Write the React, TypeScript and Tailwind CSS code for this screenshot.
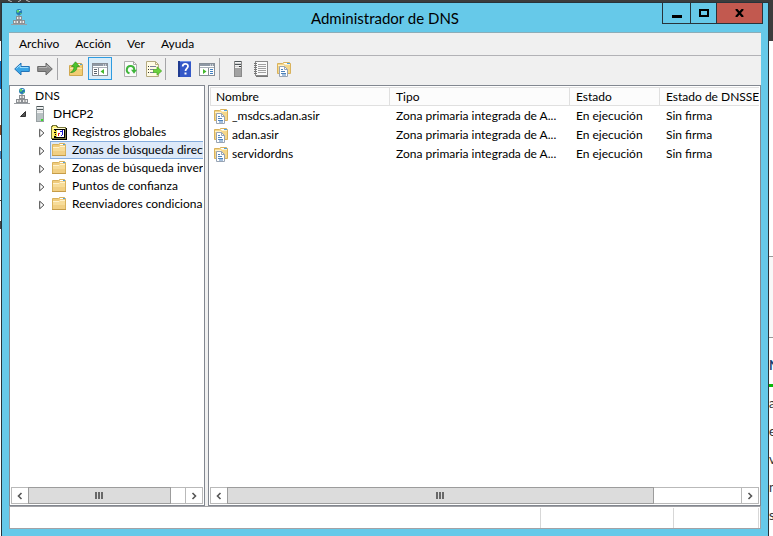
import React from "react";

type IconProps = { className?: string };

const svgProps = {
  width: 16,
  height: 16,
  viewBox: "0 0 16 16",
  "aria-hidden": true,
} as const;

function DnsIcon({ className = "" }: IconProps) {
  return (
    <svg {...svgProps} className={`shrink-0 ${className}`}>
      <circle cx="8" cy="3" r="3" fill="#2277b4" />
      <path d="M6 1h2.500v1.500L7 4 5.500 3zM9 4h2l-1.500 1.500z" fill="#5fd06a" />
      <path d="M8 1.500h1.500" stroke="#c8ecff" />
      <path d="M8 6v2" stroke="#777" />
      <g fill="#ececec" stroke="#8b8f93" strokeWidth="1">
        <rect x="5.500" y="7.500" width="5" height="3" />
        <rect x="2.500" y="11.500" width="5" height="3" />
        <rect x="8.500" y="11.500" width="5" height="3" />
      </g>
      <path d="M0 15.500h16" stroke="#9b9fa3" />
      <path d="M7 9h2M4 13h2M10 13h2" stroke="#777" />
    </svg>
  );
}

function ServerIcon({ dark = false, className = "" }: IconProps & { dark?: boolean }) {
  return (
    <svg {...svgProps} className={`shrink-0 ${className}`}>
      <rect x="4.500" y=".5" width="7" height="15" fill={dark ? "#a2a2a2" : "#b9c1c3"} stroke={dark ? "#8a8a8a" : "#98a0a2"} />
      <path d="M5 1h6v5H5z" fill={dark ? "#cfcfcf" : "#dfe3e4"} />
      <path d="M5 .5h6M5 3.500h6" stroke="#4e5659" />
      <path d="M5 1.500h6M5 4.500h6M5 6.500h6" stroke="#f4f4f4" />
      <rect x="9" y={dark ? 5 : 13} width="2" height={dark ? 1 : 2} fill={dark ? "#333" : "#38e02a"} />
    </svg>
  );
}

function FolderIcon({ className = "" }: IconProps) {
  return (
    <svg {...svgProps} className={`shrink-0 ${className}`}>
      <path d="M1.500 2.500h6l1-1h5l1 1v11h-13z" fill="#efcb7c" stroke="#d9b25c" />
      <path d="M2 5.500h5.500l1-1H14v9H2z" fill="#f7dc99" />
      <path d="M2 9h12v4.500H2z" fill="#f1cf83" />
      <path d="M2 5.500h6l1-1h5" stroke="#fff2cc" fill="none" />
      <path d="M9 2.500h3" stroke="#fff" />
      <path d="M12 2.500h2" stroke="#4fa2df" />
      <path d="M1 13.500h14" stroke="#c69c48" />
    </svg>
  );
}

function ZoneIcon({ className = "" }: IconProps) {
  return (
    <svg {...svgProps} className={`shrink-0 ${className}`}>
      <path d="M1.500 2.500h5l1-1h6l1 1v10h-13z" fill="#f5d78a" stroke="#d9b25c" />
      <path d="M2 4.500h6l1-1h5" stroke="#fff2cc" fill="none" />
      <path d="M8 2.500h3" stroke="#fff" />
      <path d="M11 2.500h3" stroke="#4fa2df" />
      <path d="M3.500 5.500h5l3 3v7h-8z" fill="#fff" stroke="#98a4b4" />
      <path d="M8.500 5.500v3h3" fill="none" stroke="#98a4b4" />
      <path d="M5 8.500h2M5 10.500h4M5 12.500h5M6 14h4" stroke="#4d82bb" />
    </svg>
  );
}

function LogIcon() {
  return (
    <svg {...svgProps} className="shrink-0" shapeRendering="crispEdges">
      <path d="M.5 14.500v-11l1-2h4l1 2h8v11z" fill="#fff27a" stroke="#77763c" />
      <path d="M2 4.500h12" stroke="#fffbd0" />
      <path d="M1 15.500h15M15.500 4v12" stroke="#000" />
      <path d="M3.500 5.500h10v8h-10z" fill="#fff" stroke="#000" />
      <path d="M3 6h3v7H3z" fill="#f4e13c" />
      <path d="M4 6.500h1M3 8.500h2M4 10.500h1M3 12.500h2" stroke="#000" />
      <path d="M7.500 9v3M7 9.500h2" stroke="#e02020" />
      <path d="M11.500 6v5M10 11.500h1M9 7.500h2" stroke="#2020d0" />
    </svg>
  );
}

function BackIcon() {
  return (
    <svg {...svgProps}>
      <path d="M.7 8 7 2v3.500h8.300v5H7V14z" fill="#3ba6e6" stroke="#2474b8" strokeLinejoin="round" />
      <path d="M2.500 7.500 6 4v2.500h8.300" fill="none" stroke="#9adcfb" />
    </svg>
  );
}

function ForwardIcon() {
  return (
    <svg {...svgProps}>
      <path d="M15.300 8 9 2v3.500H.7v5H9V14z" fill="#8b8b8b" stroke="#696969" strokeLinejoin="round" />
      <path d="M1.700 6.500H10V4.300l3.200 3.200" fill="none" stroke="#b5b5b5" />
    </svg>
  );
}

function UpFolderIcon() {
  return (
    <svg {...svgProps}>
      <path d="M1.500 4.500h6l1-2h5l1 1v11h-13z" fill="#f2cd74" stroke="#d0a850" />
      <path d="M9 3.500h3" stroke="#fff" />
      <path d="M12 3.500h2" stroke="#4fa2df" />
      <path d="M2 7.500h12" stroke="#fbe8af" />
      <path d="M2.500 11.500C5 10.500 6 8 6 5.500H3.500L7.500.8l4 4.700H9C9 9 7 11.500 2.500 11.500z" fill="#4cc42c" stroke="#318f1c" strokeWidth=".7" />
    </svg>
  );
}

function PaneIcon({ play = false }: { play?: boolean }) {
  return (
    <svg {...svgProps}>
      <rect x=".5" y="2.500" width="15" height="12" fill="#fff" stroke="#878e96" />
      <path d="M1 3h14v2H1z" fill="#8e99a5" />
      <path d="M1 6.500h14" stroke="#a9b1b9" />
      <path d="M11 4h1M13 4h1" stroke="#fff" />
      {play ? (
        <>
          <path d="M9.500 7v7" stroke="#878e96" />
          <path d="M11 8.500h3M11 10.500h3M11 12.500h3" stroke="#3f7fc0" />
          <path d="M4 8v5l3.500-2.500z" fill="#43b82c" />
        </>
      ) : (
        <>
          <path d="M6.500 7v7" stroke="#878e96" />
          <path d="M2 8.500h3M2 10.500h3M2 12.500h3" stroke="#59626c" />
          <path d="M12 8v5l-3.500-2.500z" fill="#43b82c" />
        </>
      )}
    </svg>
  );
}

function RefreshIcon() {
  return (
    <svg {...svgProps}>
      <path d="M1.500.5h9l3 3v12h-12z" fill="#fbfbfb" stroke="#b0b0b0" />
      <path d="M10.500.5v3h3" fill="none" stroke="#a5a5a5" />
      <path d="M6.500 12.300A3.700 3.700 0 1 1 11.200 9" fill="none" stroke="#3fb53b" strokeWidth="2" />
      <path d="M8 8.800h6L11 12.800z" fill="#3fb53b" />
    </svg>
  );
}

function ExportIcon() {
  return (
    <svg {...svgProps}>
      <path d="M.5.5h9l3 3v12H.5z" fill="#fffbe4" stroke="#b5aa80" />
      <path d="M9.500.5v3h3" fill="none" stroke="#b5aa80" />
      <path d="M2 5.500h1M2 8.500h1M2 11.500h1" stroke="#333" />
      <path d="M4 5.500h6M4 8.500h4M4 11.500h4" stroke="#7b7f9b" />
      <path d="M7.500 8.500H11V5.800L15.700 10 11 14.200v-2.700H7.500z" fill="#6bd13e" stroke="#44a51f" strokeWidth=".7" />
    </svg>
  );
}

function HelpIcon() {
  return (
    <svg {...svgProps}>
      <rect x="2" y="0" width="13" height="16" fill="#3559c8" />
      <path d="M2 0h2v16H2z" fill="#203b91" />
      <path d="M4 .5h11" stroke="#6f92e8" />
      <path d="M6.700 5.500C6.700 2 12 2 12 5.200c0 2-2.500 2.300-2.500 4.800" fill="none" stroke="#fff" strokeWidth="1.800" />
      <rect x="8.500" y="11.500" width="2" height="2" fill="#fff" />
    </svg>
  );
}

function NotebookIcon() {
  return (
    <svg {...svgProps}>
      <rect x="2.500" y=".5" width="12" height="14" fill="#fafafa" stroke="#8a8a8a" />
      <path d="M3 15.500h12" stroke="#777" />
      <path d="M5 3.500h8M5 5.500h8M5 7.500h8M5 9.500h8M5 11.500h8" stroke="#a0a0a0" />
      <path d="M1 2.500h3M1 4.500h3M1 6.500h3M1 8.500h3M1 10.500h3M1 12.500h3" stroke="#777" />
    </svg>
  );
}

function ToolButton({ label, active = false, children }: { label: string; active?: boolean; children: React.ReactNode }) {
  return (
    <button
      type="button"
      aria-label={label}
      aria-pressed={active}
      className={`flex h-[23px] shrink-0 items-center justify-center border ${
        active ? "mx-px w-6 border-[#2f9be0] bg-[#d9ecf8]" : "w-[23px] border-transparent"
      }`}
    >
      {children}
    </button>
  );
}

function Separator() {
  return <span className="mr-1.5 h-[22px] w-px shrink-0 bg-[#a5a5a8]" />;
}

function ScrollBar({ label, thumb }: { label: string; thumb: string }) {
  return (
    <div role="group" aria-label={label} className="flex h-[17px] shrink-0 border border-[#b9b9b9] bg-white">
      <button type="button" aria-label="Izquierda" className="flex w-4 shrink-0 items-center justify-center">
        <svg width="6" height="8" viewBox="0 0 6 8">
          <path d="M4.500 1 1.500 4l3 3" fill="none" stroke="#555" strokeWidth="1.600" />
        </svg>
      </button>
      <div className="-my-px min-w-0 flex-1">
        <div className={`flex h-full items-center justify-center gap-px border border-[#9c9c9c] bg-[#dcdcdc] ${thumb}`}>
          <span className="h-[7px] w-0.5 bg-[#686868]" />
          <span className="h-[7px] w-0.5 bg-[#686868]" />
          <span className="h-[7px] w-0.5 bg-[#686868]" />
        </div>
      </div>
      <button type="button" aria-label="Derecha" className="flex w-[17px] shrink-0 items-center justify-center border-l border-[#b9b9b9]">
        <svg width="6" height="8" viewBox="0 0 6 8">
          <path d="M1.500 1l3 3-3 3" fill="none" stroke="#555" strokeWidth="1.600" />
        </svg>
      </button>
    </div>
  );
}

function Expander() {
  return (
    <svg width="6" height="10" viewBox="0 0 6 10" className="mt-0.5 shrink-0" aria-hidden="true">
      <path d="M.7 1.200v7.600L4.900 5z" fill="#fff" stroke="#444" />
    </svg>
  );
}

const menus = ["Archivo", "Acción", "Ver", "Ayuda"];

const folders = [
  { name: "Registros globales", log: true },
  { name: "Zonas de búsqueda directa", selected: true },
  { name: "Zonas de búsqueda inversa" },
  { name: "Puntos de confianza" },
  { name: "Reenviadores condicionales" },
];

const columns = ["Nombre", "Tipo", "Estado", "Estado de DNSSEC"];
const zones = ["_msdcs.adan.asir", "adan.asir", "servidordns"];

function TreePane() {
  return (
    <nav aria-label="Árbol de consola" className="flex w-[196px] shrink-0 flex-col border border-[#828790] bg-white p-px">
      <ul role="tree" className="min-h-0 flex-1 overflow-hidden whitespace-nowrap leading-[18px]">
        <li role="treeitem" className="flex h-[18px] items-center gap-[5px] pl-[3px]">
          <DnsIcon />
          DNS
        </li>
        <li role="treeitem" aria-expanded="true" className="flex h-[18px] items-center gap-[5px] pl-2">
          <svg width="8" height="8" viewBox="0 0 8 8" className="shrink-0" aria-hidden="true">
            <path d="M6.500 1.500v5h-5z" fill="#555" stroke="#333" />
          </svg>
          <ServerIcon />
          DHCP2
        </li>
        {folders.map((f) => (
          <li key={f.name} role="treeitem" aria-selected={!!f.selected} className="flex h-[18px] items-center gap-[5px] pl-7">
            <Expander />
            <span
              className={`flex h-[18px] min-w-0 flex-1 items-center gap-[5px] border border-r-0 ${
                f.selected ? "border-[#84acdd] bg-[#dde9f9]" : "border-transparent"
              }`}
            >
              {f.log ? <LogIcon /> : <FolderIcon />}
              {f.name}
            </span>
          </li>
        ))}
      </ul>
      <ScrollBar label="Desplazamiento del árbol" thumb="w-[91%]" />
    </nav>
  );
}

function ListPane() {
  return (
    <main className="flex min-w-0 flex-1 flex-col border border-[#828790] bg-white p-px">
      <div className="min-h-0 flex-1 overflow-hidden">
        <table className="w-full table-fixed border-separate border-spacing-0 whitespace-nowrap text-left">
          <colgroup>
            <col className="w-[180px]" />
            <col className="w-[180px]" />
            <col className="w-[90px]" />
            <col />
          </colgroup>
          <thead>
            <tr>
              {columns.map((c) => (
                <th
                  key={c}
                  scope="col"
                  className="overflow-hidden border-y border-r border-[#e0e0e0] bg-[#fcfcfc] py-0 pl-1.5 font-normal leading-[17px] first:border-l first:pl-[5px] last:border-r-0"
                >
                  {c}
                </th>
              ))}
            </tr>
          </thead>
          <tbody>
            {zones.map((z) => (
              <tr key={z} className="h-[19px] leading-[19px]">
                <td className="overflow-hidden py-0 pl-[3px]">
                  <span className="flex items-center gap-[3px]">
                    <ZoneIcon />
                    {z}
                  </span>
                </td>
                <td className="overflow-hidden py-0 pl-1.5">Zona primaria integrada de A...</td>
                <td className="overflow-hidden py-0 pl-1.5">En ejecución</td>
                <td className="overflow-hidden py-0 pl-1.5">Sin firma</td>
              </tr>
            ))}
          </tbody>
        </table>
      </div>
      <ScrollBar label="Desplazamiento de la lista" thumb="w-[83%]" />
    </main>
  );
}

function BackdropLeft() {
  return (
    <div aria-hidden="true" className="flex w-px shrink-0 flex-col bg-white">
      <div className="h-[39px] bg-[#3c3c3c]" />
      <div className="mt-5 h-7 bg-[#0a6fc2]" />
      <div className="mt-9 h-2.5 bg-[#8a4a24]" />
      <div className="mt-4 h-2 bg-[#3f86c4]" />
      <div className="mt-5 h-px bg-[#444]" />
      <div className="mt-5 h-px bg-[#444]" />
      <div className="mt-5 h-2 bg-[#444]" />
    </div>
  );
}

function BackdropRight() {
  return (
    <div aria-hidden="true" className="flex w-1 shrink-0 flex-col overflow-hidden bg-white text-[13px] leading-7 text-[#333]">
      <div className="h-[39px] shrink-0 bg-[#3c3c3c]" />
      <div className="h-[215px] shrink-0" />
      <div className="h-[82px] shrink-0 border-y border-[#999] bg-[#f8f8f8]" />
      <div className="flex h-[46px] shrink-0 items-center pt-2 font-bold text-[#1a3f70]">N</div>
      <div className="mb-0.5 h-[3px] shrink-0 bg-[#08b808]" />
      {["a", "e", "v", "n", "s"].map((c) => (
        <span key={c} className="h-7 shrink-0">{c}</span>
      ))}
    </div>
  );
}

export default function App() {
  return (
    <div className="flex h-screen flex-col overflow-hidden bg-[#3c3c3c] font-['Lato','Open_Sans',sans-serif] text-[12px] text-black">
      <svg width="32" height="2" viewBox="0 0 32 2" className="shrink-0" aria-hidden="true">
        <path d="M8 0l4 2M18 2l3-2M26 0l4 2" stroke="#bbb" />
      </svg>
      <div className="flex min-h-0 flex-1">
        <BackdropLeft />
        <div className="flex min-w-0 flex-1 flex-col border-x border-t border-[#28333a] bg-[#66c9e9] px-[7px] pb-[7px]">
          <header className="relative flex h-[29px] shrink-0 items-center justify-center">
            <DnsIcon className="absolute left-[2px] top-[6px]" />
            <h1 className="text-[15px] leading-7">Administrador de DNS</h1>
            <div className="absolute -right-0.5 -top-px flex h-[22px] border border-[#28333a]">
              <button type="button" aria-label="Minimizar" className="flex w-[27px] items-center justify-center">
                <span className="mt-1.5 h-[3px] w-2.5 bg-black" />
              </button>
              <button type="button" aria-label="Maximizar" className="flex w-[26px] items-center justify-center border-l border-[#28333a]">
                <span className="h-2 w-2.5 border-2 border-black" />
              </button>
              <button type="button" aria-label="Cerrar" className="flex w-[46px] items-center justify-center border-l border-[#28333a] bg-[#c2594f]">
                <svg width="9" height="8" viewBox="0 0 9 8">
                  <path d="M1 0l7 8M8 0L1 8" stroke="#000" strokeWidth="2.200" />
                </svg>
              </button>
            </div>
          </header>
          <div className="flex min-h-0 flex-1 flex-col bg-[#f0f0f0]">
            <div role="menubar" className="flex h-6 shrink-0 items-center gap-4 border-y border-t-[#8cadb8] border-b-[#b2b2b6] pl-2.5">
              {menus.map((m) => (
                <button key={m} type="button" role="menuitem">{m}</button>
              ))}
            </div>
            <div role="toolbar" aria-label="Herramientas" className="flex h-[29px] shrink-0 items-center pb-1 pl-px">
              <ToolButton label="Atrás"><BackIcon /></ToolButton>
              <ToolButton label="Adelante"><ForwardIcon /></ToolButton>
              <span className="w-px" />
              <Separator />
              <ToolButton label="Subir un nivel"><UpFolderIcon /></ToolButton>
              <ToolButton label="Mostrar u ocultar árbol" active><PaneIcon /></ToolButton>
              <span className="w-1.5" />
              <ToolButton label="Actualizar"><RefreshIcon /></ToolButton>
              <ToolButton label="Exportar lista"><ExportIcon /></ToolButton>
              <Separator />
              <ToolButton label="Ayuda"><HelpIcon /></ToolButton>
              <ToolButton label="Mostrar u ocultar acciones"><PaneIcon play /></ToolButton>
              <span className="w-px" />
              <Separator />
              <ToolButton label="Nuevo servidor"><ServerIcon dark /></ToolButton>
              <ToolButton label="Registro"><NotebookIcon /></ToolButton>
              <ToolButton label="Nueva zona"><ZoneIcon /></ToolButton>
            </div>
            <div className="flex min-h-0 flex-1 gap-[3px]">
              <TreePane />
              <ListPane />
            </div>
            <footer className="flex h-[23px] shrink-0 border border-[#a2a2a6] bg-white pt-px">
              <span className="flex-1 border-r border-[#d7d7d7]" />
              <span className="w-[133px] border-r border-[#d7d7d7]" />
              <span className="mr-px w-[85px] border-r border-[#d7d7d7]" />
            </footer>
          </div>
        </div>
        <BackdropRight />
      </div>
    </div>
  );
}
